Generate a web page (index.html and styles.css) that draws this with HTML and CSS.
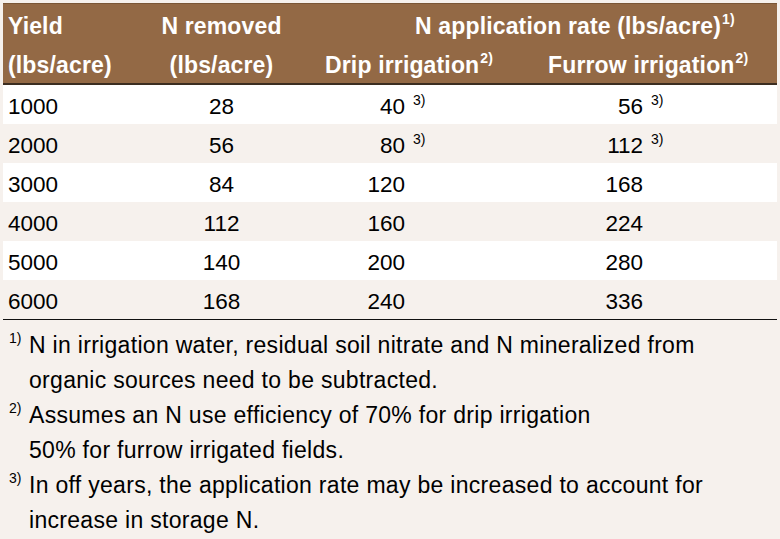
FILE: index.html
```html
<!DOCTYPE html>
<html>
<head>
<meta charset="utf-8">
<link rel="stylesheet" href="styles.css">
</head>
<body>
<div class="page">
  <table class="data">
    <colgroup>
      <col class="c1"><col class="c2"><col class="c3"><col class="c4">
    </colgroup>
    <thead>
      <tr class="h1">
        <th class="left">Yield</th>
        <th class="center">N removed</th>
        <th class="app" colspan="2">N application rate (lbs/acre)<sup>1)</sup></th>
      </tr>
      <tr class="h2">
        <th class="left">(lbs/acre)</th>
        <th class="center">(lbs/acre)</th>
        <th class="drip">Drip irrigation<sup>2)</sup></th>
        <th class="furrow">Furrow irrigation<sup>2)</sup></th>
      </tr>
    </thead>
    <tbody>
      <tr><td class="left">1000</td><td class="center">28</td><td class="drip"><span class="num">40</span><sup>3)</sup></td><td class="furrow"><span class="num">56</span><sup>3)</sup></td></tr>
      <tr><td class="left">2000</td><td class="center">56</td><td class="drip"><span class="num">80</span><sup>3)</sup></td><td class="furrow"><span class="num">112</span><sup>3)</sup></td></tr>
      <tr><td class="left">3000</td><td class="center">84</td><td class="drip"><span class="num">120</span></td><td class="furrow"><span class="num">168</span></td></tr>
      <tr><td class="left">4000</td><td class="center">112</td><td class="drip"><span class="num">160</span></td><td class="furrow"><span class="num">224</span></td></tr>
      <tr><td class="left">5000</td><td class="center">140</td><td class="drip"><span class="num">200</span></td><td class="furrow"><span class="num">280</span></td></tr>
      <tr><td class="left">6000</td><td class="center">168</td><td class="drip"><span class="num">240</span></td><td class="furrow"><span class="num">336</span></td></tr>
    </tbody>
  </table>
  <div class="notes">
    <div class="note"><sup>1)</sup><p>N in irrigation water, residual soil nitrate and N mineralized from<br>organic sources need to be subtracted.</p></div>
    <div class="note"><sup>2)</sup><p>Assumes an N use efficiency of 70% for drip irrigation<br>50% for furrow irrigated fields.</p></div>
    <div class="note"><sup>3)</sup><p>In off years, the application rate may be increased to account for<br>increase in storage N.</p></div>
  </div>
</div>
</body>
</html>
```

FILE: styles.css
```css
html, body {
  margin: 0;
  padding: 0;
  background: #f6f1ed;
}
body {
  font-family: "Liberation Sans", Arial, sans-serif;
  color: #000;
  width: 780px;
  height: 539px;
  overflow: hidden;
}
.page {
  padding: 3px 3px 0 3px;
}
.data {
  width: 774px;
  border-collapse: collapse;
  table-layout: fixed;
}
.c1 { width: 147px; }
.c2 { width: 143px; }
.c3 { width: 232px; }
.c4 { width: 252px; }

.data th, .data td {
  padding: 0;
  white-space: nowrap;
}
thead {
  background: #936945;
  color: #fff;
}
.data th {
  font-weight: bold;
  font-size: 23px;
  letter-spacing: 0.15px;
  height: 39px;
  padding-top: 6px;
  box-sizing: border-box;
  text-align: left;
  vertical-align: middle;
  line-height: 33px;
}
.h1 th { border-top: 1px solid #7a5636; }
.h2 th { border-bottom: 2px solid #3b2d20; height: 41px; padding-top: 5px; }
.data th.left { padding-left: 5px; }
.data th.center { text-align: center; }
.data th.app { padding-left: 122px; }
.data th.drip { padding-left: 32px; }
.data th.furrow { padding-left: 23px; }
.data th sup {
  font-size: 14px;
  vertical-align: 10px;
  line-height: 0;
  margin-left: 1px;
}

.data td {
  font-size: 22.5px;
  height: 39px;
  box-sizing: border-box;
  padding-top: 4px;
  line-height: 35px;
  vertical-align: middle;
}
tbody tr:nth-child(odd) { background: #fff; }
tbody tr:nth-child(even) { background: #f6f1ed; }
tbody tr:last-child td { border-bottom: 1px solid #111; }
.data td.left { padding-left: 5px; }
.data td.center { text-align: center; }
.data td.drip { padding-left: 63px; }
.data td.furrow { padding-left: 69px; }
.num {
  display: inline-block;
  width: 49px;
  text-align: right;
}
.data td sup {
  font-size: 14px;
  vertical-align: 9px;
  line-height: 0;
  margin-left: 8px;
}

.notes {
  padding-top: 8px;
}
.note {
  display: flex;
  font-size: 23px;
  letter-spacing: 0.3px;
  line-height: 35px;
}
.note sup {
  flex: 0 0 20px;
  padding-left: 6px;
  font-size: 14px;
  letter-spacing: 0;
  line-height: 20px;
  vertical-align: top;
}
.note p {
  margin: 0;
  white-space: nowrap;
}
```
